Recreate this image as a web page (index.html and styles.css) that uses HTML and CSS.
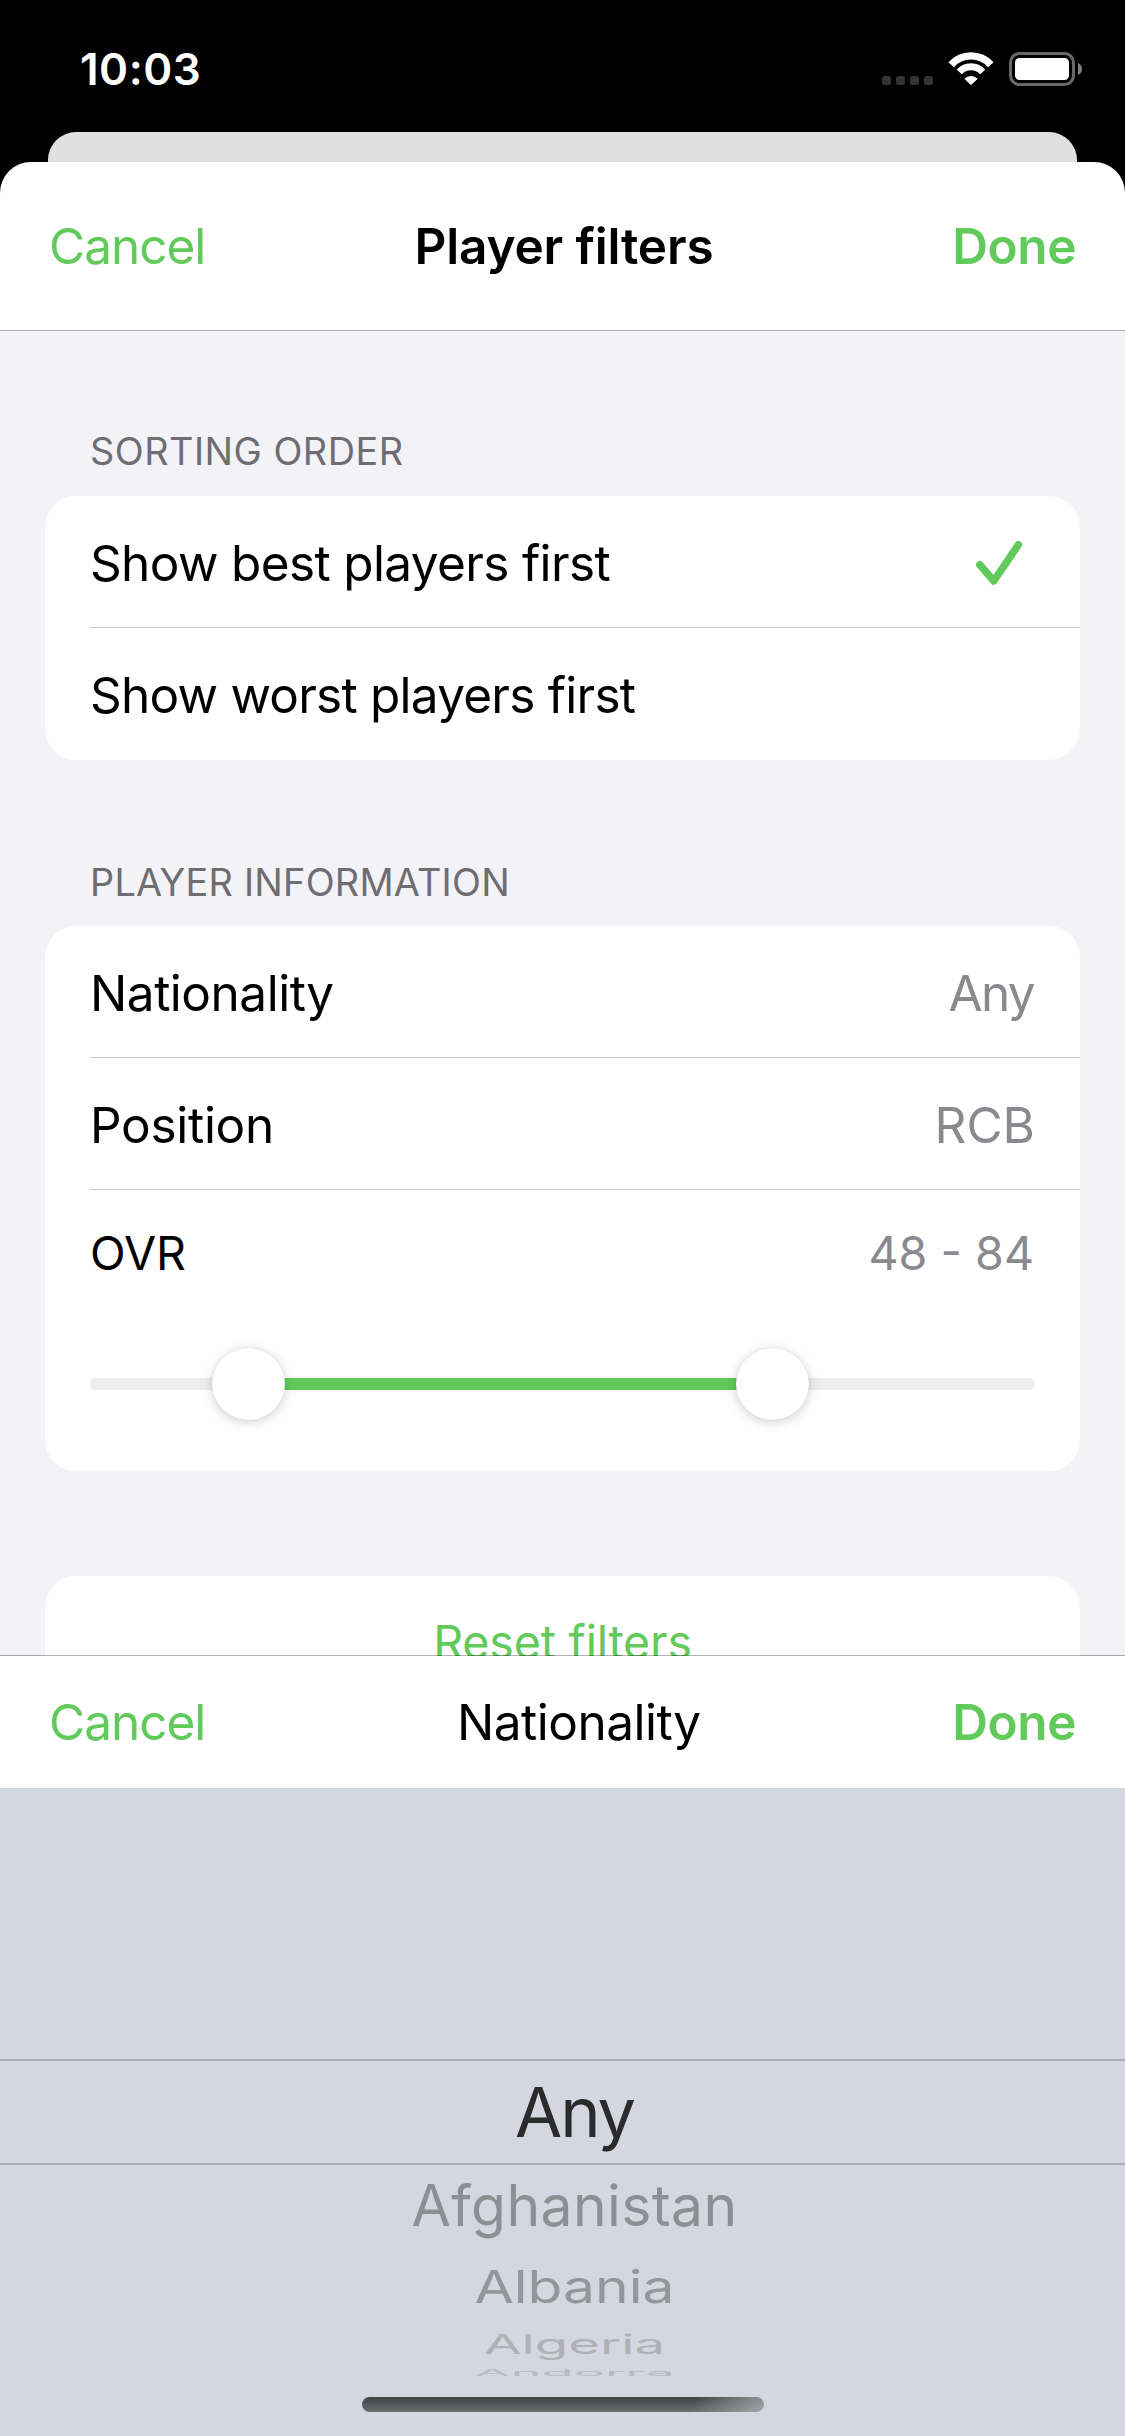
FILE: index.html
```html
<!DOCTYPE html>
<html lang="en">
<head>
<meta charset="utf-8">
<title>Player filters</title>
<link rel="stylesheet" href="styles.css">
</head>
<body>
<div class="screen">
  <header class="status">
    <span class="time">10:03</span>
    <div class="status-icons">
      <svg width="51" height="34" viewBox="0 0 51 34" fill="#333">
        <rect x="0" y="24" width="9" height="9" rx="2.5"/>
        <rect x="14" y="24" width="9" height="9" rx="2.5"/>
        <rect x="28" y="24" width="9" height="9" rx="2.5"/>
        <rect x="42" y="24" width="9" height="9" rx="2.5"/>
      </svg>
      <svg width="46" height="34" viewBox="0 0 46 34" fill="none" stroke="#fff">
        <path d="M3.2 12.7A26.6 26.6 0 0 1 42.8 12.7" stroke-width="7.4"/>
        <path d="M11.3 20A15.7 15.7 0 0 1 34.7 20" stroke-width="6.8"/>
        <path d="M16.3 26.7A10 10 0 0 1 29.7 26.7L23.7 32.5Q23 33.2 22.3 32.5Z" fill="#fff" stroke="none"/>
      </svg>
      <svg width="73" height="34" viewBox="0 0 73 34">
        <rect x="1.5" y="1.5" width="63" height="31" rx="9" fill="none" stroke="#696969" stroke-width="3"/>
        <rect x="6" y="6" width="54" height="22" rx="4.5" fill="#fff"/>
        <path d="M69 11C71.5 12 73 14.300 73 17S71.500 22 69 23Z" fill="#808080"/>
      </svg>
    </div>
  </header>
  <div class="back-card"></div>
  <main class="sheet">
    <nav class="nav">
      <span class="action cancel">Cancel</span>
      <h1 class="title">Player filters</h1>
      <span class="action done">Done</span>
    </nav>
    <div class="content">
      <h2 class="group-title sorting">Sorting order</h2>
      <section class="card">
        <div class="row">
          <span class="show-best">Show best players first</span>
          <svg class="check" width="46" height="44" viewBox="0 0 46 44" fill="none" stroke="#62ca5b" stroke-width="7.500" stroke-linecap="round" stroke-linejoin="round">
            <path d="M3.8 23.800L17.800 40L42.300 3.800"/>
          </svg>
        </div>
        <div class="row"><span class="show-worst">Show worst players first</span></div>
      </section>
      <h2 class="group-title info">Player information</h2>
      <section class="card">
        <div class="row"><span class="nationality">Nationality</span><span class="value any">Any</span></div>
        <div class="row"><span class="position">Position</span><span class="value">RCB</span></div>
        <div class="row range-row"><span class="ovr">OVR</span><span class="value range">48 - 84</span></div>
        <div class="slider">
          <div class="track">
            <div class="fill" style="left:16.800%;width:55.400%"></div>
            <div class="thumb" style="left:16.800%"></div>
            <div class="thumb" style="left:72.200%"></div>
          </div>
        </div>
      </section>
      <section class="card reset-card">
        <div class="row reset">Reset filters</div>
      </section>
    </div>
    <div class="picker-bar">
      <span class="action cancel">Cancel</span>
      <span class="nationality">Nationality</span>
      <span class="action done">Done</span>
    </div>
    <div class="picker">
      <div class="option selected">Any</div>
      <div class="option near">Afghanistan</div>
      <div class="option mid">Albania</div>
      <div class="option far">Algeria</div>
      <div class="option edge">Andorra</div>
      <div class="home"></div>
    </div>
  </main>
</div>
</body>
</html>
```
FILE: styles.css
```css
* { box-sizing: border-box; }
body {
  margin: 0;
  background: #000;
  font-family: Inter, "Liberation Sans", sans-serif;
  font-size: 49.5px;
  color: #000;
}
h1, h2 { margin: 0; }
svg { display: block; flex: none; }

.screen {
  width: 1125px;
  height: 2436px;
  display: flex;
  flex-direction: column;
  overflow: hidden;
}

/* Status bar */
.status {
  height: 132px;
  padding: 6px 43px 0 80px;
  display: flex;
  align-items: center;
  justify-content: space-between;
  color: #fff;
}
.time { font-size: 44px; font-weight: 600; letter-spacing: 0.5px; }
.status-icons { display: flex; gap: 15px; }

/* Sheets */
.back-card {
  height: 30px;
  margin: 0 48px;
  background: #e0e0e0;
  border-radius: 28px 28px 0 0;
}
.sheet {
  flex: 1;
  display: flex;
  flex-direction: column;
  background: #fff;
  border-radius: 31px 31px 0 0;
  overflow: hidden;
}
.nav {
  height: 169px;
  padding: 0 49px;
  display: grid;
  grid-template-columns: 1fr auto 1fr;
  align-items: center;
  border-bottom: 1px solid #a9a9ae;
}
.nav .done { justify-self: end; }
.action { color: #62ca5b; }
.cancel { letter-spacing: -1px; }
.done { font-weight: 600; letter-spacing: -0.4px; }
.title { padding-left: 3px; font-size: 49.5px; font-weight: 600; letter-spacing: -0.17px; }

/* Grouped list */
.content {
  height: 1325px;
  padding: 97px 45px 0;
  background: #f2f2f7;
  overflow: hidden;
}
.group-title {
  padding-left: 45px;
  font-size: 37.8px;
  font-weight: 400;
  line-height: 46px;
  text-transform: uppercase;
  color: #6d6d72;
}
.sorting { margin-bottom: 22px; letter-spacing: 0.51px; }
.info { margin: 99px 0 21px; letter-spacing: 0.26px; }
.card {
  padding-left: 45px;
  background: #fff;
  border-radius: 31px;
}
.row {
  height: 132px;
  padding: 1px 45px 0 0;
  display: flex;
  align-items: center;
  justify-content: space-between;
}
.row + .row { height: 133px; margin-top: -1px; border-top: 1px solid #c6c6c8; }
.row + .range-row { height: 127px; padding-top: 0; font-size: 46.600px; }
.value { color: #8a8a8e; }
.any { margin-right: 1px; letter-spacing: -1.690px; }
.range { margin-right: 1px; }
.show-best { letter-spacing: -0.64px; }
.show-worst { letter-spacing: -0.76px; }
.nationality { letter-spacing: -0.480px; }
.position { letter-spacing: -0.290px; }
.ovr { letter-spacing: -0.1px; }
.check { margin: 1px 13px 0 0; }

/* Range slider */
.slider { height: 155px; padding: 62px 45px 0 0; }
.track {
  position: relative;
  height: 12px;
  border-radius: 6px;
  background: #ededed;
}
.fill { position: absolute; top: 0; height: 12px; background: #62ca5b; }
.thumb {
  position: absolute;
  top: -30px;
  width: 73px;
  height: 72px;
  margin-left: -36.500px;
  border-radius: 50%;
  background: #fff;
  box-shadow: 0 0 1px rgba(0, 0, 0, 0.15), 0 2px 12px rgba(0, 0, 0, 0.19);
}
.reset-card { margin-top: 105px; }
.reset {
  justify-content: center;
  padding: 0 45px 0 0;
  font-size: 46.600px;
  letter-spacing: -0.2px;
  color: #62ca5b;
}

/* Picker */
.picker-bar {
  position: relative;
  height: 133px;
  margin-top: -1px;
  padding: 0 49px;
  display: flex;
  align-items: center;
  justify-content: space-between;
  background: #fff;
  background-clip: padding-box;
  border-top: 1px solid rgba(0, 0, 0, 0.3);
}
.picker {
  flex: 1;
  padding-top: 271px;
  background: #d4d7df;
  text-align: center;
}
.option { padding-left: 24px; font-size: 57px; }
.selected {
  height: 106px;
  border: solid #a9abb0;
  border-width: 2px 0;
  font-size: 68.400px;
  line-height: 102px;
  letter-spacing: -2px;
  color: #2b2b2c;
}
.near { line-height: 82px; letter-spacing: 0.4px; color: #8e8f93; }
.mid { line-height: 79px; transform: scaleY(0.79); color: #95969a; }
.far { font-size: 54.500px; line-height: 36px; transform: scaleY(0.5); color: #b0b1b6; }
.edge { font-size: 52.400px; line-height: 22px; transform: scaleY(0.16); color: #b9bbc0; }
.home {
  width: 402px;
  height: 15px;
  margin: 13px auto 0;
  border-radius: 8px;
  background:
    linear-gradient(115deg, transparent 82%, rgba(180, 182, 188, 0.75) 100%),
    linear-gradient(#424345, #6b6c70);
}
```
